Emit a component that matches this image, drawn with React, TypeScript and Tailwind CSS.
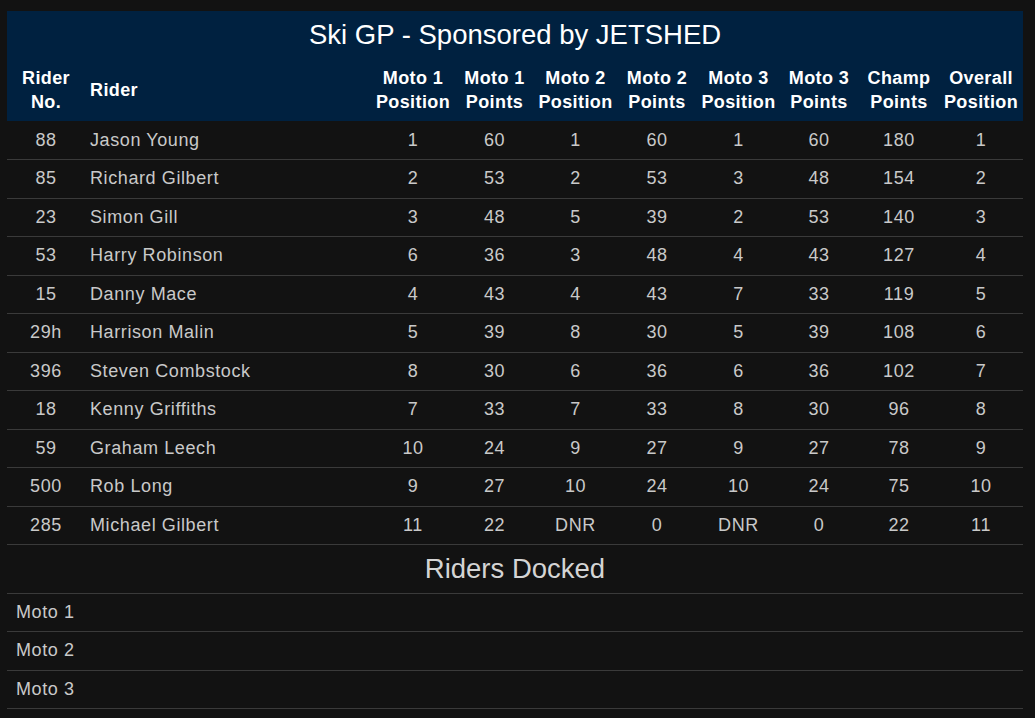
import React from "react";

interface Rider {
  no: string;
  name: string;
  m1pos: string;
  m1pts: string;
  m2pos: string;
  m2pts: string;
  m3pos: string;
  m3pts: string;
  champ: string;
  overall: string;
}

const riders: Rider[] = [
  { no: "88", name: "Jason Young", m1pos: "1", m1pts: "60", m2pos: "1", m2pts: "60", m3pos: "1", m3pts: "60", champ: "180", overall: "1" },
  { no: "85", name: "Richard Gilbert", m1pos: "2", m1pts: "53", m2pos: "2", m2pts: "53", m3pos: "3", m3pts: "48", champ: "154", overall: "2" },
  { no: "23", name: "Simon Gill", m1pos: "3", m1pts: "48", m2pos: "5", m2pts: "39", m3pos: "2", m3pts: "53", champ: "140", overall: "3" },
  { no: "53", name: "Harry Robinson", m1pos: "6", m1pts: "36", m2pos: "3", m2pts: "48", m3pos: "4", m3pts: "43", champ: "127", overall: "4" },
  { no: "15", name: "Danny Mace", m1pos: "4", m1pts: "43", m2pos: "4", m2pts: "43", m3pos: "7", m3pts: "33", champ: "119", overall: "5" },
  { no: "29h", name: "Harrison Malin", m1pos: "5", m1pts: "39", m2pos: "8", m2pts: "30", m3pos: "5", m3pts: "39", champ: "108", overall: "6" },
  { no: "396", name: "Steven Combstock", m1pos: "8", m1pts: "30", m2pos: "6", m2pts: "36", m3pos: "6", m3pts: "36", champ: "102", overall: "7" },
  { no: "18", name: "Kenny Griffiths", m1pos: "7", m1pts: "33", m2pos: "7", m2pts: "33", m3pos: "8", m3pts: "30", champ: "96", overall: "8" },
  { no: "59", name: "Graham Leech", m1pos: "10", m1pts: "24", m2pos: "9", m2pts: "27", m3pos: "9", m3pts: "27", champ: "78", overall: "9" },
  { no: "500", name: "Rob Long", m1pos: "9", m1pts: "27", m2pos: "10", m2pts: "24", m3pos: "10", m3pts: "24", champ: "75", overall: "10" },
  { no: "285", name: "Michael Gilbert", m1pos: "11", m1pts: "22", m2pos: "DNR", m2pts: "0", m3pos: "DNR", m3pts: "0", champ: "22", overall: "11" },
];

const headers = [
  ["Moto 1", "Position"],
  ["Moto 1", "Points"],
  ["Moto 2", "Position"],
  ["Moto 2", "Points"],
  ["Moto 3", "Position"],
  ["Moto 3", "Points"],
  ["Champ", "Points"],
  ["Overall", "Position"],
];

const colWidths = ["w-[82px]", "w-[81px]", "w-[81px]", "w-[82px]", "w-[81px]", "w-[80px]", "w-[80px]", "w-[84px]"];

export default function App() {
  return (
    <div
      className="min-h-[718px] bg-[#121212] pt-[11px] pl-[7px]"
      style={{ fontFamily: '"Liberation Sans", Arial, sans-serif' }}
    >
      <table className="w-[1016px] table-fixed border-collapse">
        <colgroup>
          <col className="w-[78px]" />
          <col className="w-[287px]" />
          {colWidths.map((w, i) => (
            <col key={i} className={w} />
          ))}
        </colgroup>
        <thead className="bg-[#002140] text-white">
          <tr>
            <th colSpan={10} className="h-[51px] pb-[3px] text-center text-[27.5px] font-normal leading-[32px]">
              Ski GP - Sponsored by JETSHED
            </th>
          </tr>
          <tr>
            <th className="h-[59px] pb-[3px] text-center text-[18px] font-bold leading-[24px] tracking-[0.4px]">
              Rider
              <br />
              No.
            </th>
            <th className="pb-[3px] pl-[5px] text-left text-[18px] font-bold leading-[24px] tracking-[0.4px]">Rider</th>
            {headers.map(([a, b], i) => (
              <th key={i} className="pb-[3px] text-center text-[18px] font-bold leading-[24px] tracking-[0.4px]">
                {a}
                <br />
                {b}
              </th>
            ))}
          </tr>
        </thead>
        <tbody className="text-[18px] tracking-[0.6px] text-[#c9c9c9]">
          {riders.map((r) => (
            <tr key={r.no} className="h-[38.5px] border-b border-[#3a3a3a]">
              <td className="text-center">{r.no}</td>
              <td className="pl-[5px] text-left">{r.name}</td>
              <td className="text-center">{r.m1pos}</td>
              <td className="text-center">{r.m1pts}</td>
              <td className="text-center">{r.m2pos}</td>
              <td className="text-center">{r.m2pts}</td>
              <td className="text-center">{r.m3pos}</td>
              <td className="text-center">{r.m3pts}</td>
              <td className="text-center">{r.champ}</td>
              <td className="text-center">{r.overall}</td>
            </tr>
          ))}
        </tbody>
      </table>

      <div className="w-[1016px] text-[#c9c9c9]">
        <div className="flex h-[48.5px] items-center justify-center border-b border-[#3a3a3a] text-[27.5px] text-[#d4d4d4]">
          Riders Docked
        </div>
        {["Moto 1", "Moto 2", "Moto 3"].map((m) => (
          <div key={m} className="flex h-[38.5px] items-center border-b border-[#3a3a3a] pl-[9px] text-[18px] tracking-[0.6px]">
            {m}
          </div>
        ))}
      </div>
    </div>
  );
}
